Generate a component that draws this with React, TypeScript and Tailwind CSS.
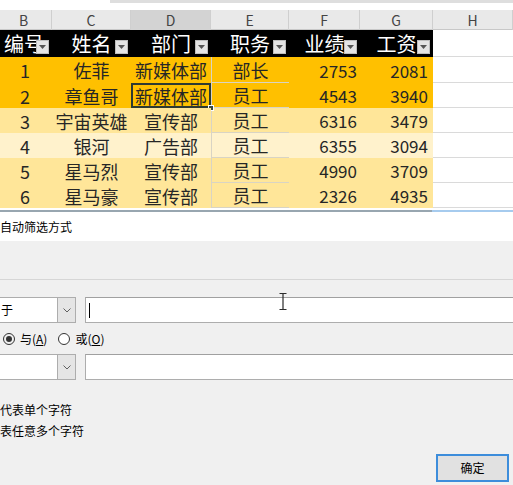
import React from 'react';

const COLS = ['B', 'C', 'D', 'E', 'F', 'G', 'H'];
const HEADS = ['编号', '姓名', '部门', '职务', '业绩', '工资'];

const ROWS = [
  { id: 1, name: '佐菲', dept: '新媒体部', pos: '部长', perf: 2753, pay: 2081, bg: 'bg-[#ffc000]', h: 'h-[26px]' },
  { id: 2, name: '章鱼哥', dept: '新媒体部', pos: '员工', perf: 4543, pay: 3940, bg: 'bg-[#ffc000]', h: 'h-[25px]' },
  { id: 3, name: '宇宙英雄', dept: '宣传部', pos: '员工', perf: 6316, pay: 3479, bg: 'bg-[#ffe699]', h: 'h-[25px]' },
  { id: 4, name: '银河', dept: '广告部', pos: '员工', perf: 6355, pay: 3094, bg: 'bg-[#fff2cc]', h: 'h-[25px]' },
  { id: 5, name: '星马烈', dept: '宣传部', pos: '员工', perf: 4990, pay: 3709, bg: 'bg-[#ffe699]', h: 'h-[25px]' },
  { id: 6, name: '星马豪', dept: '宣传部', pos: '员工', perf: 2326, pay: 4935, bg: 'bg-[#ffe699]', h: 'h-[25px]' },
];

const GRID = 'grid grid-cols-[56px_79px_80px_78px_71px_73px_80px] -ml-[4px]';

const FilterBtn = () => (
  <div className="absolute right-[3px] bottom-[3px] w-[13px] h-[14px] bg-[#e4e4e4] border border-[#bdbdbd] flex items-center justify-center">
    <svg width="7" height="4" viewBox="0 0 7 4"><path d="M0 0h7L3.5 4z" fill="#555" /></svg>
  </div>
);

const Chevron = () => (
  <svg width="8" height="5" viewBox="0 0 8 5" fill="none">
    <path d="M0.5 0.5L4 4L7.5 0.5" stroke="#606060" strokeWidth="1" />
  </svg>
);

const Combo = ({ text }: { text?: string }) => (
  <div className="-ml-[2px] w-[78px] h-full flex bg-white border border-[#adadad]">
    <div className="flex-1 overflow-hidden flex items-center pl-[2px] text-[12px] text-black">
      {text && <span className="whitespace-nowrap">{text}</span>}
    </div>
    <div className="w-[18px] bg-[#e5e5e5] border-l border-[#adadad] flex items-center justify-center">
      <Chevron />
    </div>
  </div>
);

export default function App() {
  return (
    <div className="w-[513px] h-[485px] overflow-hidden bg-white relative flex flex-col font-['Noto_Sans_CJK_SC',sans-serif]">
      {/* top strip */}
      <div className="h-[10px] flex">
        <div className="w-[110px]" />
        <div className="flex-1 h-[3px] bg-[#dedede]" />
      </div>

      {/* column letters */}
      <div className={GRID + ' h-[20px] bg-[#e9e9e9] border-b border-[#c8c8c8]'}>
        {COLS.map(c => (
          <div key={c}
            className={(c === 'D' ? 'bg-[#d3d3d3] ' : '') + 'flex items-center justify-center border-r border-[#cfcfcf] text-[14px] text-[#444] font-[\'Liberation_Sans\',sans-serif]'}>
            {c}
          </div>
        ))}
      </div>

      {/* table header */}
      <div className={GRID + ' h-[27px]'}>
        {HEADS.map(h => (
          <div key={h} className="relative bg-black flex items-center justify-center text-white text-[20px] leading-none">
            {h}
            <FilterBtn />
          </div>
        ))}
        <div className="bg-white border-b border-[#dadada]" />
      </div>

      {/* rows */}
      {ROWS.map(r => (
        <div key={r.id} className={GRID + ' ' + r.h + ' text-[18px] text-[#262626] leading-none'}>
          <div className={r.bg + ' flex items-center justify-center pl-[2px]'}>{r.id}</div>
          <div className={r.bg + ' flex items-center justify-center'}>{r.name}</div>
          <div className={r.bg + ' relative flex items-center justify-center'}>
            {r.dept}
            {r.id === 2 && (
              <>
                <div className="absolute inset-0 border-2 border-[#2d3a33]" />
                <div className="absolute -right-[3px] -bottom-[3px] w-[6px] h-[6px] bg-[#3a4a42] border border-white" />
              </>
            )}
          </div>
          <div className={r.bg + ' flex items-center justify-center border-l border-b border-[#d9d4c4]'}>{r.pos}</div>
          <div className={r.bg + ' flex items-center justify-end pr-[3px] text-[17px]'}>{r.perf}</div>
          <div className={r.bg + ' flex items-center justify-end pr-[5px] text-[17px]'}>{r.pay}</div>
          <div className="bg-white border-b border-[#dadada]" />
        </div>
      ))}
      <div className="h-[2px] bg-white" />

      {/* dialog */}
      <div className="flex h-[2px]">
        <div className="w-[432px] bg-[#98a6b0]" />
        <div className="flex-1 bg-[#a6cbee]" />
      </div>
      <div className="h-[29px] bg-white flex items-center text-[12px] text-black">
        <span>自动筛选方式</span>
      </div>
      <div className="flex-1 bg-[#f0f0f0] flex flex-col text-[12px] text-black">
        <div className="h-[38px]" />
        <div className="h-px bg-[#d6d6d6]" />
        <div className="mt-[17px] h-[26px] flex gap-[9px]">
          <Combo text="于" />
          <div className="flex-1 -mr-[4px] bg-white border border-[#adadad] border-t-[#a0a0a0] flex items-center pl-[3px]">
            <div className="w-px h-[15px] bg-black" />
          </div>
        </div>
        <div className="h-[31px] flex items-center">
          <div className="ml-[3px] w-[12px] h-[12px] rounded-full border border-[#333] flex items-center justify-center">
            <div className="w-[6px] h-[6px] rounded-full bg-[#333]" />
          </div>
          <span className="ml-[5px]">与(<span className="underline">A</span>)</span>
          <div className="ml-[11px] w-[12px] h-[12px] rounded-full border border-[#333] bg-white" />
          <span className="ml-[5px]">或(<span className="underline">O</span>)</span>
        </div>
        <div className="h-[26px] flex gap-[9px]">
          <Combo />
          <div className="flex-1 -mr-[4px] bg-white border border-[#adadad] border-t-[#a0a0a0]" />
        </div>
        <div className="mt-[22px] h-[16px] leading-[16px] whitespace-nowrap">代表单个字符</div>
        <div className="mt-[5px] h-[16px] leading-[16px] whitespace-nowrap">表任意多个字符</div>
        <div className="mt-[15px] ml-[436px] w-[73px] h-[28px] bg-[#e1e1e1] border-2 border-[#3d8ddb] flex items-center justify-center">
          确定
        </div>
      </div>

      {/* I-beam mouse cursor */}
      <svg className="absolute left-[279px] top-[293px]" width="8" height="17" viewBox="0 0 8 17">
        <path d="M0.5 0.5h7M0.5 16.5h7M4 0.5v16" stroke="#2b2b2b" strokeWidth="1.2" fill="none" />
      </svg>
    </div>
  );
}
